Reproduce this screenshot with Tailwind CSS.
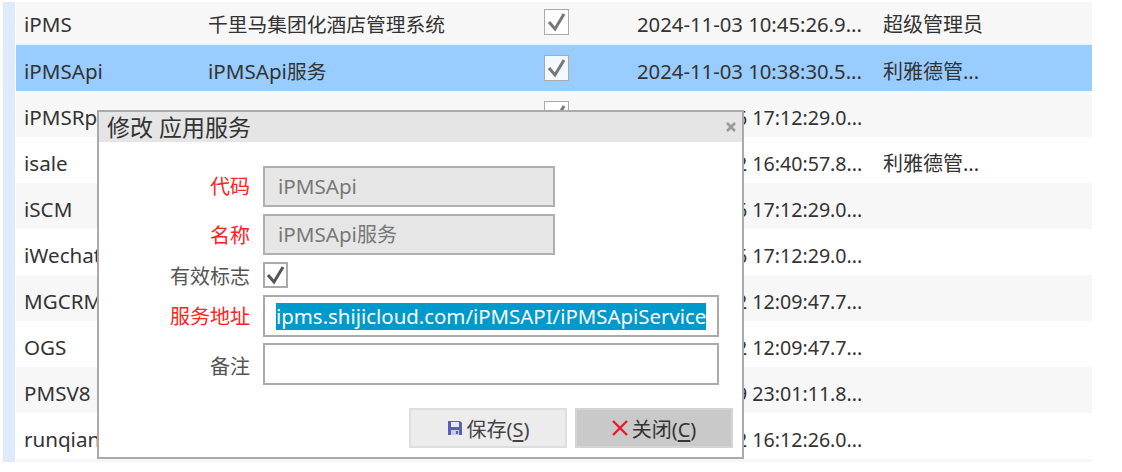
<!DOCTYPE html>
<html lang="zh">
<head>
  <meta charset="UTF-8">
  <title>应用服务</title>
  <script src="https://cdn.jsdelivr.net/npm/@tailwindcss/browser@4"></script>
</head>
<body class="bg-white w-[1122px] h-[472px] overflow-hidden relative text-[20px] text-[#333] font-['Noto_Sans','Noto_Sans_CJK_SC',sans-serif]">
<div class="flex ml-[3px] mt-[2px] h-[460px] overflow-hidden">
  <div class="w-[12px] mr-px bg-[#deebfb]"></div>
  <div class="w-[1076px]">
    <!-- rows -->
    <div class="flex items-center h-[43px] pt-[3px] bg-[#f7f7f7] border-b border-[#e8eef5]">
      <div class="w-[192px] pl-2 text-[20.6px]">iPMS</div><div class="w-[336px] text-[19.75px]">千里马集团化酒店管理系统</div>
      <div class="w-[93px] -mt-[6px]"><svg width="25" height="26" viewBox="0 0 25 26"><rect x=".5" y=".5" width="24" height="25" fill="#fff" stroke="#aaa"/><path d="M5 13l6 7L20 5" fill="none" stroke="#777" stroke-width="3"/></svg></div>
      <div class="w-[246px] text-[20.3px]">2024-11-03 10:45:26.9...</div><div>超级管理员</div>
    </div>
    <div class="flex items-center h-[46px] pt-[7px] bg-[#99ccff]">
      <div class="w-[192px] pl-2 text-[20.6px]">iPMSApi</div><div class="w-[336px] text-[19.75px]"><span class="text-[20.6px]">iPMSApi</span>服务</div>
      <div class="w-[93px] -mt-[8px]"><svg width="25" height="26" viewBox="0 0 25 26"><rect x=".5" y=".5" width="24" height="25" fill="#f4f8ff" stroke="#aaa"/><path d="M5 13l6 7L20 5" fill="none" stroke="#777" stroke-width="3"/></svg></div>
      <div class="w-[246px] text-[20.3px]">2024-11-03 10:38:30.5...</div><div>利雅德管...</div>
    </div>
    <div class="flex items-center h-[46px] pt-[7px] bg-[#f7f7f7]">
      <div class="w-[192px] pl-2 text-[20.6px]">iPMSRpt</div><div class="w-[336px] pt-[6px] text-[19.75px]">千里马报表服务系统</div>
      <div class="w-[93px] -mt-[8px]"><svg width="25" height="26" viewBox="0 0 25 26"><rect x=".5" y=".5" width="24" height="25" fill="#fff" stroke="#aaa"/><path d="M5 13l6 7L20 5" fill="none" stroke="#777" stroke-width="3"/></svg></div>
      <div class="w-[246px] pl-[8px] text-[19.6px]">2021-07-16 17:12:29.0...</div>
    </div>
    <div class="flex items-center h-[46px] pt-[7px] bg-white">
      <div class="w-[621px] pl-2 text-[20.6px]">isale</div><div class="w-[246px] pl-[8px] text-[19.6px]">2022-07-22 16:40:57.8...</div><div>利雅德管...</div>
    </div>
    <div class="flex items-center h-[46px] pt-[7px] bg-[#f7f7f7]">
      <div class="w-[621px] pl-2 text-[20.6px]">iSCM</div><div class="w-[246px] pl-[8px] text-[19.6px]">2021-07-16 17:12:29.0...</div>
    </div>
    <div class="flex items-center h-[46px] pt-[7px] bg-white">
      <div class="w-[621px] pl-2 text-[20.6px]">iWechat</div><div class="w-[246px] pl-[8px] text-[19.6px]">2021-07-16 17:12:29.0...</div>
    </div>
    <div class="flex items-center h-[46px] pt-[7px] bg-[#f7f7f7]">
      <div class="w-[621px] pl-2 text-[20.6px]">MGCRM</div><div class="w-[246px] pl-[8px] text-[19.6px]">2022-07-22 12:09:47.7...</div>
    </div>
    <div class="flex items-center h-[46px] pt-[7px] bg-white">
      <div class="w-[621px] pl-2 text-[20.6px]">OGS</div><div class="w-[246px] pl-[8px] text-[19.6px]">2022-07-22 12:09:47.7...</div>
    </div>
    <div class="flex items-center h-[46px] pt-[7px] bg-[#f7f7f7]">
      <div class="w-[621px] pl-2 text-[20.6px]">PMSV8</div><div class="w-[246px] pl-[8px] text-[19.6px]">2020-03-09 23:01:11.8...</div>
    </div>
    <div class="flex items-center h-[46px] pt-[7px] bg-white">
      <div class="w-[621px] pl-2 text-[20.6px]">runqian</div><div class="w-[246px] pl-[8px] text-[19.6px]">2022-07-22 16:12:26.0...</div>
    </div>
    <div class="h-[4px] bg-[#f7f7f7]"></div>
  </div>
</div>

<!-- dialog -->
<div class="absolute left-[97px] top-[110px] w-[647px] h-[349px] bg-white border-2 border-[#aaa]">
  <div class="flex items-center justify-between h-[30px] bg-[#e5e5e5] pl-2 pr-[6px] text-[23px] text-[#333]">
    <span>修改 应用服务</span>
    <svg width="10" height="10" viewBox="0 0 10 10"><path d="M1 1l8 8M9 1l-8 8" stroke="#999" stroke-width="2.6"/></svg>
  </div>
  <div class="pt-[24px] flex flex-col">
    <div class="flex items-center h-[41px]">
      <label class="w-[151px] text-right text-[#f22]">代码</label>
      <div class="ml-[13px] w-[292px] h-[41px] pl-[13px] flex items-center bg-[#e6e6e6] border-2 border-[#b0b0b0] text-[#777] text-[20.6px]">iPMSApi</div>
    </div>
    <div class="flex items-center h-[41px] mt-[7px]">
      <label class="w-[151px] text-right text-[#f22] pt-[2px]">名称</label>
      <div class="ml-[13px] w-[292px] h-[41px] pl-[13px] flex items-center bg-[#e6e6e6] border-2 border-[#b0b0b0] text-[#777]"><span class="text-[20.6px]">iPMSApi</span>服务</div>
    </div>
    <div class="flex items-center h-[26px] mt-[7px]">
      <label class="w-[151px] text-right text-[#555] pt-[4px]">有效标志</label>
      <svg class="ml-[13px]" width="25" height="26" viewBox="0 0 25 26"><rect x="1" y="1" width="23" height="24" fill="#fff" stroke="#aaa" stroke-width="2"/><path d="M5 13l6 7L20 5" fill="none" stroke="#555" stroke-width="3"/></svg>
    </div>
    <div class="flex items-center h-[42px] mt-[7px]">
      <label class="w-[151px] text-right text-[#f22] pt-[2px]">服务地址</label>
      <div class="ml-[13px] w-[456px] h-[42px] pl-[11px] flex items-center bg-white border-2 border-[#aaa] text-[20.4px]"><span class="bg-[#0099cc] text-white leading-[27px]">ipms.shijicloud.com/iPMSAPI/iPMSApiService</span></div>
    </div>
    <div class="flex items-center h-[42px] mt-[6px]">
      <label class="w-[151px] text-right text-[#555] pt-[5px]">备注</label>
      <div class="ml-[13px] w-[456px] h-[42px] bg-white border-2 border-[#aaa]"></div>
    </div>
    <div class="flex justify-end gap-[8px] pr-[9px] mt-[23px]">
      <div class="w-[158px] h-[40px] flex items-center justify-center gap-[4px] bg-[#ececec] border-2 border-[#ddd] text-[#444]">
        <svg width="16" height="16" viewBox="0 0 16 16"><path d="M1 1h12l2 2v12H1z" fill="#5b5fb5"/><path d="M4 2h8v5H4z" fill="#e8e8f4"/><path d="M4 10h8v5H4z" fill="#c9cbe8"/><path d="M9 11h2v3H9z" fill="#5b5fb5"/></svg>
        <span class="pt-[3px]">保存(<span class="underline decoration-2 underline-offset-[3px]">S</span>)</span>
      </div>
      <div class="w-[158px] h-[40px] flex items-center justify-center gap-[4px] bg-[#c9c9c9] border-2 border-[#d4d4d4] text-[#333]">
        <svg width="16" height="16" viewBox="0 0 16 16"><path d="M1 1l14 14M15 1L1 15" stroke="#e8192c" stroke-width="2.4"/></svg>
        <span class="pt-[3px]">关闭(<span class="underline decoration-2 underline-offset-[3px]">C</span>)</span>
      </div>
    </div>
  </div>
</div>
</body>
</html>
